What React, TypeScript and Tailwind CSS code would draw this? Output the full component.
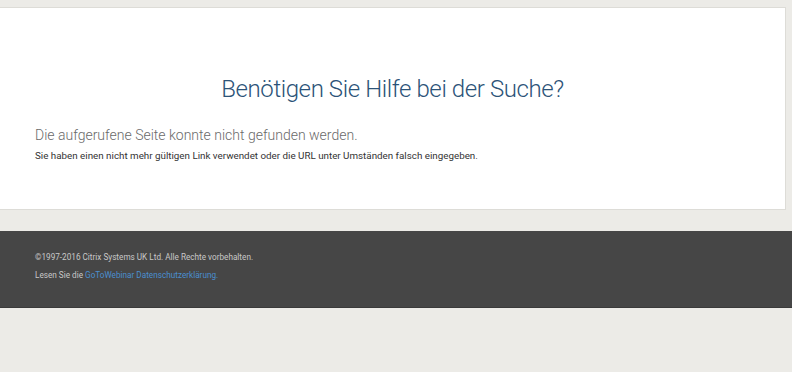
export default function App() {
  return (
    <div className="w-[792px] h-[372px] bg-[#ecebe7] overflow-hidden" style={{ fontFamily: "Roboto, 'Open Sans', sans-serif" }}>
      <div className="pt-[7px] pr-[6px]">
        <div className="h-[203px] bg-white border border-l-0 border-[#dddcd7] flex flex-col">
          <h1 className="mt-[66px] text-center text-[24px] leading-[30px] font-light text-[#2c5378] tracking-[-0.4px]">
            Benötigen Sie Hilfe bei der Suche?
          </h1>
          <p className="mt-[22px] ml-[35px] text-[14px] leading-[18px] font-light text-[#6a6a6a]">
            Die aufgerufene Seite konnte nicht gefunden werden.
          </p>
          <p className="mt-[5px] ml-[35px] text-[9.8px] leading-[14px] text-[#333]">
            Sie haben einen nicht mehr gültigen Link verwendet oder die URL unter Umständen falsch eingegeben.
          </p>
        </div>
      </div>
      <div className="mt-[21px] h-[77px] bg-[#464646] border-b border-[#3a3a3a] pl-[35px] pt-[20px]">
        <p className="text-[8.2px] leading-[12px] text-[#c8c8c8]">©1997-2016 Citrix Systems UK Ltd. Alle Rechte vorbehalten.</p>
        <p className="mt-[6px] text-[8.2px] leading-[12px] text-[#c8c8c8]">
          Lesen Sie die <span className="text-[#4a8fd0]">GoToWebinar Datenschutzerklärung.</span>
        </p>
      </div>
    </div>
  );
}
